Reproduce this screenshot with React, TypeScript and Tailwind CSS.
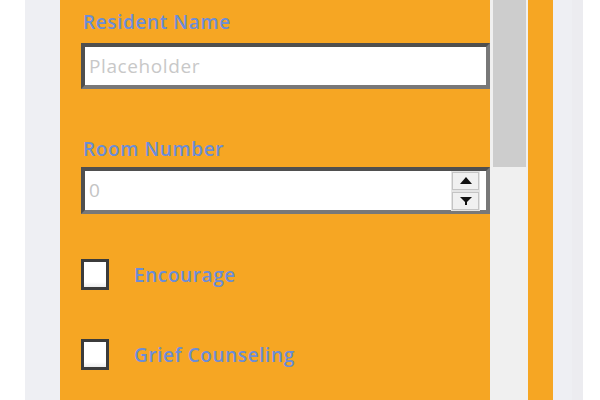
import React from 'react'

const labelCls =
  "pl-[2px] text-[19px] font-semibold leading-[24px] tracking-[0.6px] text-[#6b8dd8]"

function Spinner() {
  return (
    <div className="flex flex-col gap-[2px] bg-[#e4e4e4] px-[1px] py-[1px]">
      <button
        type="button"
        className="flex h-[18px] w-[27px] items-center justify-center border border-[#c4c4c4] bg-[#f0f0f0]"
        aria-label="Increment"
      >
        <svg width="12" height="7" viewBox="0 0 12 7">
          <path d="M6 0 L12 7 L0 7 Z" fill="#111" />
        </svg>
      </button>
      <button
        type="button"
        className="flex h-[18px] w-[27px] items-center justify-center border border-[#c4c4c4] bg-[#f0f0f0]"
        aria-label="Decrement"
      >
        <svg width="12" height="8" viewBox="0 0 12 8">
          <path d="M0 0 L12 0 L6 6 Z" fill="#111" />
          <rect x="5" y="5" width="2" height="3" fill="#111" />
        </svg>
      </button>
    </div>
  )
}

function Checkbox({ label }: { label: string }) {
  return (
    <label className="flex items-center">
      <span className="h-[31px] w-[28px] border-[3px] border-[#3b3b3b] bg-gradient-to-b from-white from-80% to-[#ececec]" />
      <span className="ml-[25px] text-[19px] font-semibold leading-[24px] tracking-[0.6px] text-[#6b8dd8]">
        {label}
      </span>
    </label>
  )
}

export default function App() {
  return (
    <div
      className="flex h-screen w-full overflow-hidden bg-white"
      style={{ fontFamily: '"Open Sans", "Liberation Sans", sans-serif' }}
    >
      <div className="w-[25px] shrink-0 bg-white" />
      <div className="w-[35px] shrink-0 bg-[#eeeff3]" />

      {/* form panel */}
      <div className="flex w-[430px] shrink-0 flex-col bg-[#f6a623] pl-[21px] pt-[10px]">
        <div className={labelCls}>Resident Name</div>
        <input
          type="text"
          placeholder="Placeholder"
          className="mt-[9px] h-[46px] w-full border-[4px] border-t-[#4f4f4f] border-l-[#4f4f4f] border-b-[#787878] border-r-[#787878] bg-white px-[4px] text-[19px] tracking-[0.6px] text-[#333] outline-none placeholder:text-[#c8c8c8]"
        />

        <div className={`${labelCls} mt-[48px]`}>Room Number</div>
        <div className="mt-[6px] flex h-[47px] w-full items-center border-[4px] border-t-[#4f4f4f] border-l-[#4f4f4f] border-b-[#787878] border-r-[#787878] bg-white pl-[4px] pr-[6px]">
          <span className="flex-1 text-[19px] tracking-[0.6px] text-[#c4c4c4]">0</span>
          <Spinner />
        </div>

        <div className="mt-[45px]">
          <Checkbox label="Encourage" />
        </div>
        <div className="mt-[49px]">
          <Checkbox label="Grief Counseling" />
        </div>
      </div>

      {/* scrollbar */}
      <div className="w-[38px] shrink-0 bg-[#f0f0f0] pl-[3px] pr-[2px]">
        <div className="h-[167px] w-full bg-[#cdcdcd]" />
      </div>

      <div className="w-[25px] shrink-0 bg-[#f6a623]" />
      <div className="w-[19px] shrink-0 bg-[#eeeff3]" />
      <div className="w-[11px] shrink-0 bg-[#ececf0]" />
      <div className="flex-1 bg-white" />
    </div>
  )
}
